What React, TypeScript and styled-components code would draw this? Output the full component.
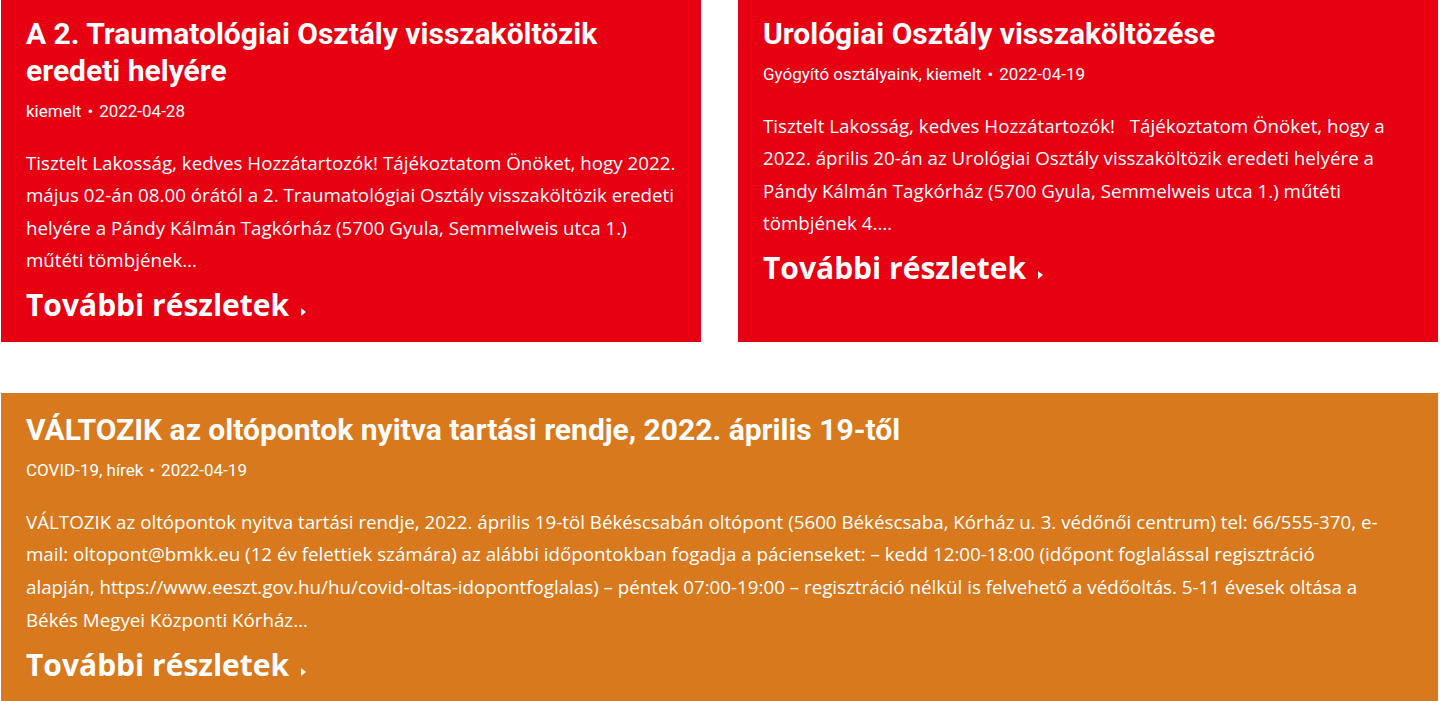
import React from "react";
import styled, { createGlobalStyle } from "styled-components";

const Global = createGlobalStyle`
  html, body { margin: 0; padding: 0; background: #ffffff; }
  body { overflow: hidden; }
`;

const Page = styled.main`
  display: flex;
  flex-direction: column;
  gap: 51px;
  width: 1437px;
  margin: -3px 0 0 1px;
`;

const Row = styled.div`
  display: grid;
  grid-template-columns: 700px 700px;
  column-gap: 37px;
`;

type Tone = "red" | "orange";

const Card = styled.article<{ $tone: Tone }>`
  background: ${(p) => (p.$tone === "red" ? "#e60012" : "#d8791e")};
  color: #ffffff;
  padding-top: 18px;
  padding-bottom: 17px;
  padding-left: 25px;
  padding-right: ${(p) => (p.$tone === "red" ? "22px" : "53px")};
  box-sizing: border-box;
  display: flex;
  flex-direction: column;
`;

const Title = styled.h2`
  margin: 0;
  font-family: Roboto, "Liberation Sans", sans-serif;
  font-weight: 700;
  font-size: 30px;
  line-height: 37px;
`;

const Meta = styled.div`
  margin-top: 10.5px;
  font-family: Roboto, "Liberation Sans", sans-serif;
  font-size: 17px;
  line-height: 22px;
`;

const Dot = styled.span`
  margin: 0 6px;
`;

const Excerpt = styled.p`
  margin: 25px 0 0 0;
  font-family: "Open Sans", "Liberation Sans", sans-serif;
  font-size: 18.75px;
  line-height: 32.6px;
`;

const More = styled.a`
  margin-top: 8.5px;
  display: inline-flex;
  align-items: baseline;
  align-self: flex-start;
  font-family: "Open Sans", "Liberation Sans", sans-serif;
  font-weight: 700;
  font-size: 30px;
  line-height: 40px;
  color: #ffffff;
  text-decoration: none;
`;

const Caret = styled.span`
  display: inline-block;
  width: 0;
  height: 0;
  margin-left: 12px;
  border-top: 4.5px solid transparent;
  border-bottom: 4.5px solid transparent;
  border-left: 5px solid #ffffff;
`;

type Post = {
  title: string;
  meta: string;
  date: string;
  text: string;
  tone: Tone;
};

const posts: Post[] = [
  {
    title: "A 2. Traumatológiai Osztály visszaköltözik eredeti helyére",
    meta: "kiemelt",
    date: "2022-04-28",
    text:
      "Tisztelt Lakosság, kedves Hozzátartozók! Tájékoztatom Önöket, hogy 2022. május 02-án 08.00 órától a 2. Traumatológiai Osztály visszaköltözik eredeti helyére a Pándy Kálmán Tagkórház (5700 Gyula, Semmelweis utca 1.) műtéti tömbjének…",
    tone: "red",
  },
  {
    title: "Urológiai Osztály visszaköltözése",
    meta: "Gyógyító osztályaink, kiemelt",
    date: "2022-04-19",
    text:
      "Tisztelt Lakosság, kedves Hozzátartozók!\u00a0\u00a0 Tájékoztatom Önöket, hogy a 2022. április 20-án az Urológiai Osztály visszaköltözik eredeti helyére a Pándy Kálmán Tagkórház (5700 Gyula, Semmelweis utca 1.) műtéti tömbjének 4.…",
    tone: "red",
  },
];

const wide: Post = {
  title: "VÁLTOZIK az oltópontok nyitva tartási rendje, 2022. április 19-től",
  meta: "COVID-19, hírek",
  date: "2022-04-19",
  text:
    "VÁLTOZIK az oltópontok nyitva tartási rendje, 2022. április 19-töl Békéscsabán oltópont (5600 Békéscsaba, Kórház u. 3. védőnői centrum) tel: 66/555-370, e-mail: oltopont@bmkk.eu (12 év felettiek számára) az alábbi időpontokban fogadja a pácienseket: – kedd 12:00-18:00 (időpont foglalással regisztráció alapján, https://www.eeszt.gov.hu/hu/covid-oltas-idopontfoglalas) – péntek 07:00-19:00 – regisztráció nélkül is felvehető a védőoltás. 5-11 évesek oltása a Békés Megyei Központi Kórház…",
  tone: "orange",
};

function PostCard({ post }: { post: Post }) {
  return (
    <Card $tone={post.tone}>
      <Title>{post.title}</Title>
      <Meta>
        {post.meta}
        <Dot>•</Dot>
        {post.date}
      </Meta>
      <Excerpt>{post.text}</Excerpt>
      <More href="#">
        További részletek
        <Caret />
      </More>
    </Card>
  );
}

export default function App() {
  return (
    <>
      <Global />
      <Page>
        <Row>
          {posts.map((p) => (
            <PostCard key={p.title} post={p} />
          ))}
        </Row>
        <PostCard post={wide} />
      </Page>
    </>
  );
}
